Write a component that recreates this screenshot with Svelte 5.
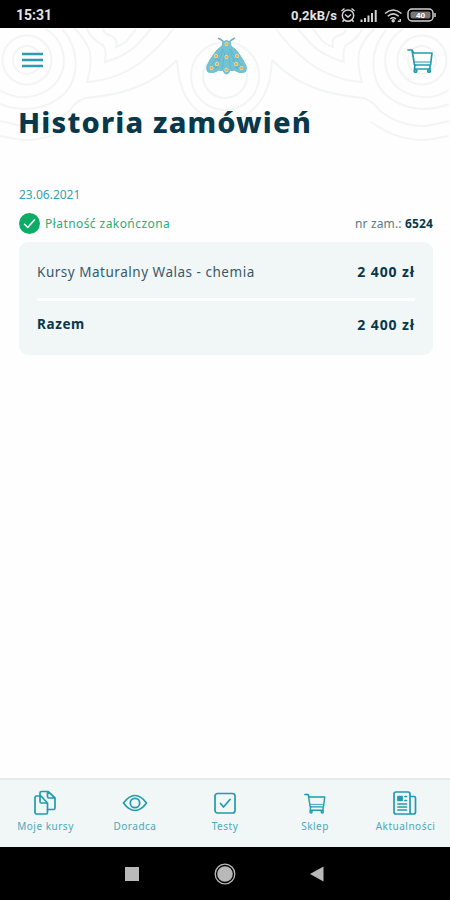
<script lang="ts">
  interface Order {
    id: string;
    date: string;
    status: string;
    items: { name: string; price: string }[];
    total: string;
  }

  const orders: Order[] = [
    {
      id: "6524",
      date: "23.06.2021",
      status: "Płatność zakończona",
      items: [{ name: "Kursy Maturalny Walas - chemia", price: "2 400 zł" }],
      total: "2 400 zł",
    },
  ];

  const tabs = [
    { icon: "courses", label: "Moje kursy" },
    { icon: "eye", label: "Doradca" },
    { icon: "test", label: "Testy" },
    { icon: "cart", label: "Sklep" },
    { icon: "news", label: "Aktualności" },
  ];

  // orange dots on the moth wings
  const spots = [
    [20.5, 7], [10, 19], [20.5, 20], [31, 19], [5.5, 31],
    [11, 27], [30, 27], [35.5, 31], [20.5, 33],
  ];
</script>

{#snippet cart()}
  <path d="M1 2h4l1.500 3H25l-1.500 12H7.500L5 2" />
  <path d="M8 17l-.5 4H23v-3" />
  <path d="M8 14h15" stroke-width="1" />
  <circle cx="8.500" cy="23" r="1.300" />
  <circle cx="22" cy="23" r="1.300" />
{/snippet}

<div class="phone">
  <div class="status-bar">
    <span class="clock">15:31</span>
    <div class="status-right">
      <span class="speed">0,2kB/s</span>
      <svg class="alarm" viewBox="0 0 16 16" width="16" height="16">
        <circle cx="8" cy="8.6" r="5.7" />
        <path d="M1.5 4 4.5 1.5M14.5 4l-3-2.5M5 7.5l3 2.5 3-2.5M3.8 13l-1.3 1.8M12.2 13l1.3 1.8" />
      </svg>
      <svg class="signal" viewBox="0 0 18 13" width="18" height="13">
        <path d="M1.5 13v-2.5M5 13V9M8.5 13V6.5M12 13V4M15.7 13V1" />
      </svg>
      <svg class="wifi" viewBox="0 0 19 15" width="19" height="15">
        <path d="M1 5.500Q9.200-1.500 17.500 5.500M3.700 8.300Q9.200 3.500 14.700 8.300M6.300 11Q9.200 8.500 12 11" />
        <circle cx="9.200" cy="12.800" r="1" />
        <path d="M14 13.500l2.500-2.500v2.500z" stroke-width="1" />
      </svg>
      <svg class="battery" viewBox="0 0 30 14" width="30" height="14">
        <rect x="1" y="1" width="25" height="12" rx="4" />
        <rect class="charge" x="3.500" y="3.500" width="20" height="7" rx="2" />
        <path d="M28 5v4" />
        <text x="13.500" y="10.300">40</text>
      </svg>
    </div>
  </div>

  <header class="header">
    <svg class="pattern" viewBox="0 28 450 122" width="450" height="122" aria-hidden="true">
      <defs>
        <g id="waves">
          <circle cx="27" cy="60" r="14" />
          <circle cx="27" cy="60" r="24.500" />
          <path d="M46 29C70 45 69 76 48 90 32 100 14 99 0 90" />
          <path d="M63 30C80 50 79 78 65 93 48 110 22 113 0 104" />
          <path d="M75 29Q86 40 90 52 92 66 87 82 117 80 141 62 160 47 173 29" />
          <path d="M87 29Q91 38 101 44 107 46 105 62 126 56 138 44L151 29" />
          <path d="M103 29q1 5 9 7 6 3 4 11 9-3 13-9l7-9" />
          <path d="M177 60Q158 79 139 86 119 95 85 98 75 102 70 110 49 127 22 126L0 121" />
          <path d="M78 122Q52 141 22 140L0 136" />
          <path d="M177 60C178 90 190 110 211 119" />
        </g>
      </defs>
      <use href="#waves" />
      <use href="#waves" transform="translate(449 0) scale(-1 1)" />
      <circle cx="225" cy="76" r="22" />
      <circle cx="225" cy="76" r="34" />
    </svg>

    <div class="toolbar">
      <svg class="burger" viewBox="0 0 22 16" width="22" height="16">
        <path d="M0 2h21M0 8h21M0 14h21" />
      </svg>
      <svg class="moth" viewBox="0 0 41 38" width="41" height="38">
        <path class="feeler" d="M12 1q4 2 6 4M29 1q-4 2-6 4" />
        <path
          class="wing"
          d="M17 5q3.500-3 7 0l1 4q6 4 8 8 4 5 7 12 1 4-1 6-6 2-11-2-2 1-4 0-1 4-3.500 4T17 33q-2 1-4 0-5 4-11 2-2-2-1-6 3-7 7-12 3-5 8-8z"
        />
        <path class="vein" d="M17 12 3 32M18 12 9 33M19 15l-3 17M24 12l14 20M23 12l9 21M22 15l3 17M9 21l6 3M32 21l-6 3M4 29l9 2M37 29l-9 2" />
        {#each spots as [cx, cy]}
          <circle class="halo" {cx} {cy} r="2" />
          <circle class="spot" {cx} {cy} r="1.300" />
        {/each}
      </svg>
      <svg class="line-icon" viewBox="0 0 26 25" width="26" height="25">
        {@render cart()}
      </svg>
    </div>
    <h1>Historia zamówień</h1>
  </header>

  <main>
    {#each orders as order}
      <section class="order">
        <div class="date">{order.date}</div>
        <div class="order-head">
          <svg class="done" viewBox="0 0 21 21" width="21" height="21">
            <circle cx="10.500" cy="10.500" r="10.500" />
            <path d="m5.500 11.200 3.300 3.300 6.700-7.700" />
          </svg>
          <span class="state">{order.status}</span>
          <span class="number">nr zam.: <b>{order.id}</b></span>
        </div>
        <div class="card">
          {#each order.items as item}
            <div class="row">
              <span class="name">{item.name}</span>
              <span class="price">{item.price}</span>
            </div>
          {/each}
          <div class="row total">
            <span class="sum">Razem</span>
            <span class="price">{order.total}</span>
          </div>
        </div>
      </section>
    {/each}
  </main>

  <nav class="tabs">
    {#each tabs as tab}
      <div class="tab">
        <svg class="line-icon" viewBox="0 0 26 26" width="26" height="26">
          {#if tab.icon === "courses"}
            <path d="M8 6H4.500Q3 6 3 7.500v15Q3 24 4.500 24H14q1.500 0 1.500-1.500V13L9 6H8v5.500q0 1.500 1.500 1.500h6" />
            <path d="M8 6V3q0-1.500 1.500-1.500H16l7 6.300V18q0 1.500-1.500 1.500h-6M15.500 2v4.500q0 1.500 1.500 1.500h5.500" />
          {:else if tab.icon === "eye"}
            <path d="M1.500 13Q7 5.500 13 5.500T24.500 13Q19 20.500 13 20.500T1.500 13z" />
            <circle cx="13" cy="13" r="4.700" />
          {:else if tab.icon === "test"}
            <rect x="3" y="3.500" width="20" height="19.500" rx="2.500" />
            <path d="m8.500 13.500 3 3.500L18 9.500" />
          {:else if tab.icon === "cart"}
            <g transform="translate(2 2.800) scale(0.830)">
              {@render cart()}
            </g>
          {:else}
            <path d="M20 24H4q-2 0-2-2V4q0-2 2-2h12q2 0 2 2v18q0 2 2 2h1.500q2 0 2-2V8q0-1.500-1.500-1.500h-3.500" />
            <rect class="solid" x="6" y="6.500" width="4" height="4" />
            <path d="M13 6.500h1.500M13 10.500h1.500M6 14h8.500M6 17h8.500M6 20h8.500" />
          {/if}
        </svg>
        <span class="label {tab.icon}">{tab.label}</span>
      </div>
    {/each}
  </nav>

  <div class="system-nav">
    <svg viewBox="0 0 24 24" width="24" height="24">
      <rect x="5" y="5" width="14" height="14" />
    </svg>
    <svg viewBox="0 0 24 24" width="24" height="24">
      <circle class="ring" cx="12" cy="12" r="9.800" />
      <circle cx="12" cy="12" r="7.800" />
    </svg>
    <svg viewBox="0 0 24 24" width="24" height="24">
      <path d="M4 12 17.500 4.500v15z" />
    </svg>
  </div>
</div>

<style>
  :global(body) {
    margin: 0;
    background: #fff;
  }

  .phone {
    width: 450px;
    height: 900px;
    display: flex;
    flex-direction: column;
    overflow: hidden;
    background: #fefefe;
    color: #07384c;
    font-family: "Noto Sans", "Open Sans", sans-serif;
  }

  svg {
    display: block;
    flex-shrink: 0;
  }

  .status-bar {
    height: 28px;
    box-sizing: border-box;
    padding: 2px 13px 0 16px;
    display: flex;
    align-items: center;
    justify-content: space-between;
    background: #000;
    color: #e4e4e4;
    font-family: Roboto, sans-serif;
    font-size: 14px;
    font-weight: 700;
  }

  .status-right {
    display: flex;
    align-items: center;
  }

  .speed {
    font-size: 13px;
    letter-spacing: 0.150px;
    margin-right: 3px;
  }

  .status-right svg {
    fill: none;
    stroke: #d2d2d2;
    stroke-width: 1.500;
  }

  .signal {
    margin: 0 6px 0 4px;
  }

  .status-right .signal {
    stroke-width: 2;
  }

  .wifi {
    margin-right: 4px;
  }

  .battery .charge {
    fill: #777;
    stroke: none;
  }

  .battery text {
    fill: #fff;
    stroke: none;
    font-size: 8px;
    text-anchor: middle;
  }

  .header {
    position: relative;
    height: 122px;
  }

  .pattern {
    position: absolute;
    inset: 0;
    fill: none;
    stroke: #f3f4f4;
    stroke-width: 2;
  }

  .toolbar {
    position: relative;
    display: flex;
    align-items: center;
    justify-content: space-between;
    height: 46px;
    padding: 9px 17px 0 22px;
  }

  .burger {
    stroke: #2f9bb0;
    stroke-width: 2.400;
  }

  .moth {
    position: relative;
    top: -4px;
    left: 1px;
  }

  .feeler {
    fill: none;
    stroke: #6eafbd;
    stroke-width: 1.500;
  }

  .wing {
    fill: #73c3d4;
    stroke: #6bbccd;
  }

  .vein {
    fill: none;
    stroke: #52a9bd;
    stroke-width: 0.500;
  }

  .halo {
    fill: #f3e3b1;
  }

  .spot {
    fill: #efaa3d;
  }

  .line-icon {
    fill: none;
    stroke: #229bae;
    stroke-width: 1.700;
    stroke-linecap: round;
    stroke-linejoin: round;
  }

  .solid {
    fill: #229bae;
  }

  h1 {
    position: relative;
    margin: 17px 0 0 18px;
    font-size: 29px;
    line-height: 44px;
    font-weight: 800;
    letter-spacing: 1.150px;
    white-space: nowrap;
  }

  main {
    flex: 1;
    padding: 35px 17px 0 19px;
  }

  .date {
    font-size: 12px;
    line-height: 20px;
    color: #36a0b2;
  }

  .order-head {
    display: flex;
    align-items: center;
    height: 37px;
    font-size: 12px;
  }

  .done {
    fill: #0dac66;
  }

  .done path {
    fill: none;
    stroke: #fff;
    stroke-width: 1.500;
    stroke-linecap: round;
    stroke-linejoin: round;
  }

  .state {
    margin-left: 5px;
    color: #2cad76;
    letter-spacing: 0.430px;
  }

  .number {
    margin-left: auto;
    color: #5d7882;
    letter-spacing: 0.150px;
  }

  .number b {
    color: #07384c;
  }

  .card {
    height: 113px;
    box-sizing: border-box;
    padding: 3px 18px;
    border-radius: 9px;
    background: #f1f6f7;
  }

  .row {
    display: flex;
    align-items: center;
    justify-content: space-between;
    height: 53px;
    font-size: 13.500px;
  }

  .name {
    color: #39596a;
    letter-spacing: 0.520px;
  }

  .price,
  .sum {
    font-weight: 700;
    letter-spacing: 0.600px;
  }

  .price {
    font-size: 14px;
    letter-spacing: 0.900px;
  }

  .total {
    height: 46px;
    border-top: 3px solid #fff;
  }

  .tabs {
    display: flex;
    height: 69px;
    box-sizing: border-box;
    border-top: 2px solid #e5eaec;
    background: #f1f6f7;
  }

  .tab {
    width: 90px;
    display: flex;
    flex-direction: column;
    align-items: center;
    padding-top: 10px;
  }

  .label {
    margin-top: 3px;
    font-size: 10px;
    line-height: 14px;
    color: #4da8b7;
    letter-spacing: 0.500px;
    white-space: nowrap;
  }

  .label.courses,
  .label.news {
    margin-left: 1px;
  }

  .system-nav {
    height: 53px;
    display: flex;
    align-items: center;
    justify-content: center;
    gap: 69px;
    background: #000;
    fill: #b9b9b9;
  }

  .ring {
    fill: none;
    stroke: #b9b9b9;
    stroke-width: 1.300;
  }
</style>
